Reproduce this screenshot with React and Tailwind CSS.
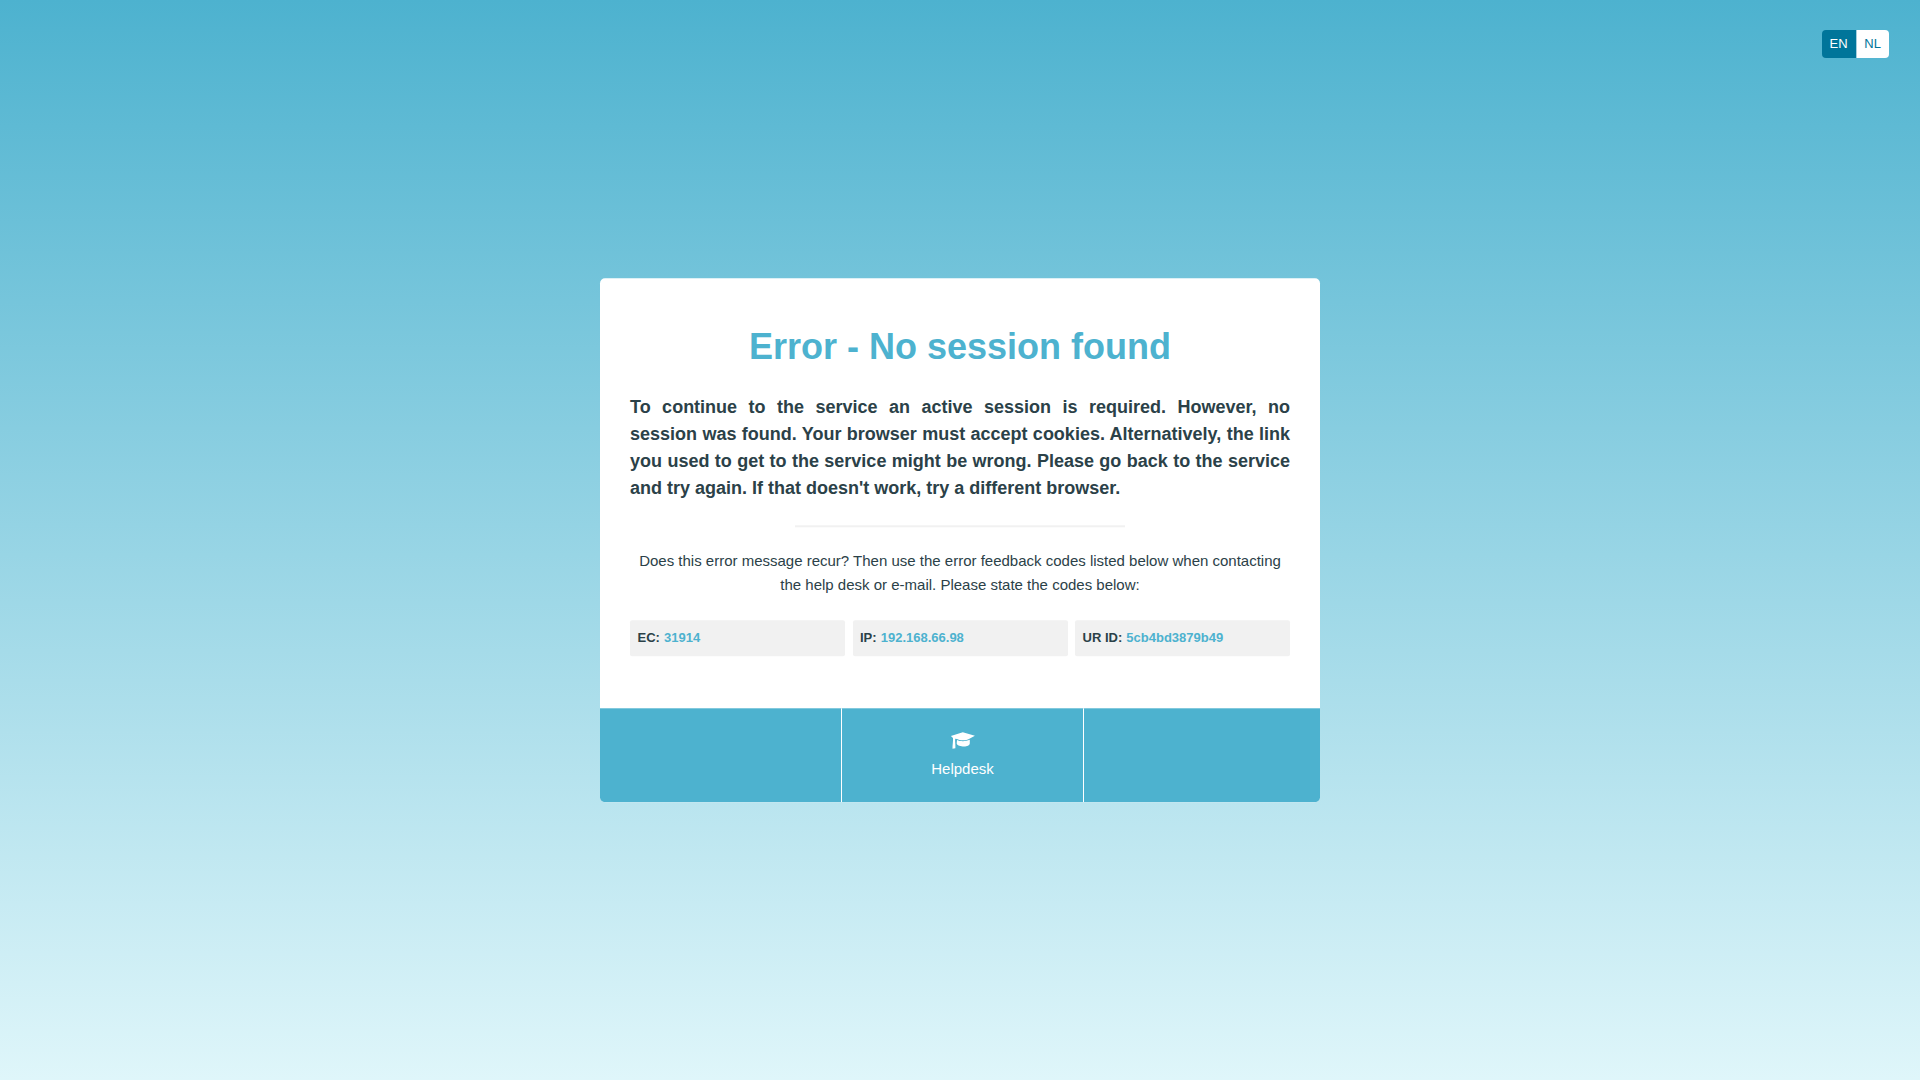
const codes = [
  ["EC:", "31914"],
  ["IP:", "192.168.66.98"],
  ["UR ID:", "5cb4bd3879b49"],
];

function GraduationCap({ className }) {
  return (
    <svg viewBox="0 0 25 18" fill="currentColor" className={className} aria-hidden="true">
      <path d="M12.8.9 24.9 4.500 19.4 7.500C16 9.500 9.800 9.500 7 7.700L5.200 7.400C4.800 9.800 5.600 12.500 5.400 17L2.500 17.500C2.400 14 3.200 10 3 6.600L.9 4.700Z" />
      <path d="M7 8.700C10 10.300 16 10.300 19.800 8.500V12C19.800 14.600 15.800 15.500 12.700 15.100C9.600 14.900 6.700 14 6.700 12Z" />
    </svg>
  );
}

export default function App() {
  return (
    <div className="relative flex h-screen items-center justify-center bg-linear-to-b/srgb from-[#4db2cf] to-[#dff6fa] font-['Liberation_Sans',Arial,sans-serif] text-[#2b4148]">
      <nav className="absolute top-[30px] right-[31px] flex h-7 overflow-hidden rounded text-[13px] leading-7">
        <a className="w-[34px] bg-[#00759a] pl-[7.500px] text-white">EN</a>
        <a className="w-[33px] border-l border-[#a6cfdd] bg-white pl-[7.300px] text-[#00759a]">NL</a>
      </nav>
      <main className="w-[720px] translate-y-[0.3px] overflow-hidden rounded-[5px] bg-white">
        <section className="h-[430px] px-[30px] pt-[46px]">
          <h1 className="text-center text-4xl leading-[46px] font-bold text-[#4db2cf]">Error - No session found</h1>
          <p className="mt-6 text-justify text-lg leading-[27px] font-bold">
            To continue to the service an active session is required. However, no session was found. Your browser must
            accept cookies. Alternatively, the link you used to get to the service might be wrong. Please go back to the
            service and try again. If that doesn't work, try a different browser.
          </p>
          <hr className="mx-auto mt-[23px] w-[330px] border-t-2 border-[#f1f1f1]" />
          <p className="mt-[22px] text-center text-[15px] leading-6">
            Does this error message recur? Then use the error feedback codes listed below when contacting the help desk
            or e-mail. Please state the codes below:
          </p>
          <ul className="mt-[23px] flex justify-between">
            {codes.map(([label, value]) => (
              <li key={label} className="flex h-9 w-[215px] gap-[4.100px] rounded-xs bg-[#f1f1f1] px-[7.500px] text-[13px] leading-[35px] font-bold">
                <span>{label}</span>
                <span className="text-[#4db2cf]">{value}</span>
              </li>
            ))}
          </ul>
        </section>
        <footer className="flex h-[94px] bg-[#4db2cf] text-[15px] text-white">
          <div className="w-[242px] border-r border-white" />
          <a className="flex w-[242px] flex-col items-center border-r border-white pt-[23px]">
            <GraduationCap className="h-[18px] w-[25px]" />
            <span className="mt-2 leading-6">Helpdesk</span>
          </a>
        </footer>
      </main>
    </div>
  );
}
